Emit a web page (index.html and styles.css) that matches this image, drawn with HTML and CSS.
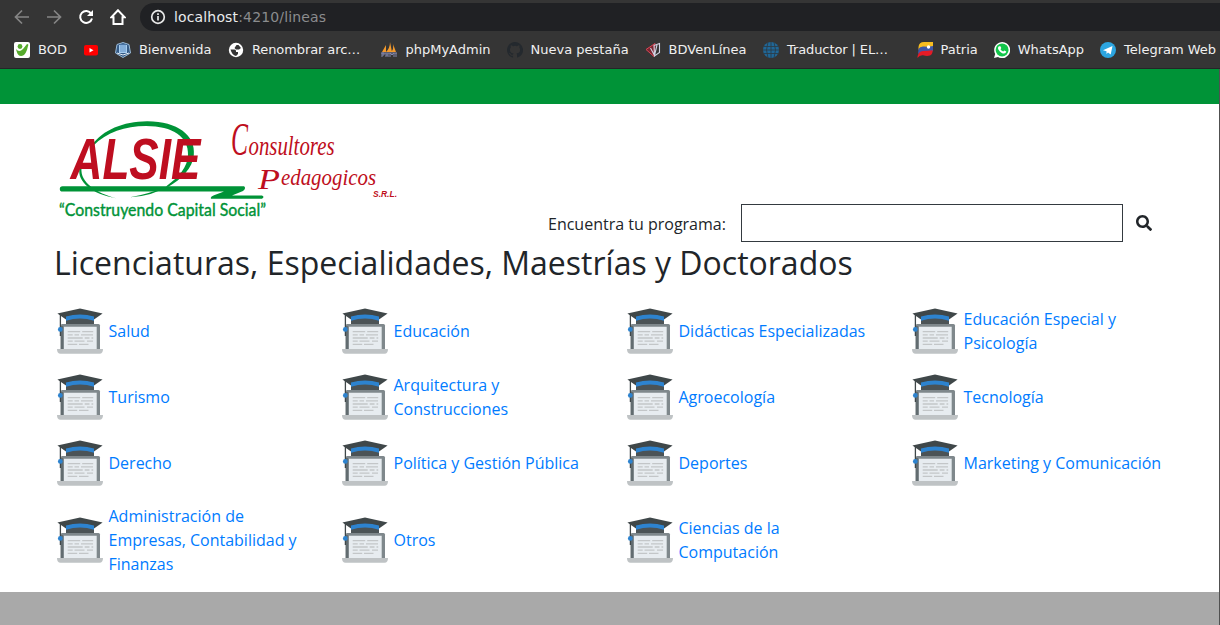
FILE: index.html
```html
<!DOCTYPE html>
<html lang="es">
<head>
<meta charset="utf-8">
<title>Líneas</title>
<link rel="stylesheet" href="styles.css">
</head>
<body>
<svg class="defs" width="0" height="0" aria-hidden="true">
  <symbol id="course" viewBox="0 0 50 50">
    <path d="M5.700 19.500q0-1.500 1.500-1.500H43.500q1.500 0 1.500 1.500V44H5.700z" fill="#7f888c"/>
    <path d="M5.700 20h2.300v24H5.700z" fill="#626c70"/>
    <path d="M9 20.800h32.700V44H9z" fill="#e7ecf0"/>
    <path d="M12.700 25.700h12.500M27.200 25.700h11M12.700 28.900h5M19.500 28.900h4.500M26 28.900h12M12.700 32h15M29.700 32h4.800M36.500 32h1.700M12.700 35.200h5M19.500 35.200h10M32 35.200h6M12.700 38.300h9.500M24 38.300h9.500" stroke="#c3c6c8" stroke-width="1.300"/>
    <path d="M2 43h46q0 4.700-3.500 4.700h-39Q2 47.700 2 43z" fill="#bfc3c5"/>
    <path d="M11 11h28v7H11z" fill="#4b5356"/>
    <path d="M2.400 7.400 25 2.400l22.600 5L39 13.500v-2q-14-5-28 0v2z" fill="#3f4749"/>
    <path d="M11 10.500q14-4.200 28 0v4.200q-14-4.300-28 0z" fill="#2d83cf"/>
    <path d="M5.400 7.500v22.500" stroke="#3f4749" stroke-width="1.300"/>
    <circle cx="5.300" cy="23.400" r="2.400" fill="#2d83cf"/>
  </symbol>
</svg>

<header class="browser">
  <div class="toolbar">
    <svg class="nav" viewBox="0 0 16 16"><path class="dim" d="M15 8H2M8 1.500 1.500 8 8 14.500"/></svg>
    <svg class="nav" viewBox="0 0 16 16"><path class="dim" d="M1 8h13M8 1.500 14.500 8 8 14.500"/></svg>
    <svg class="nav" viewBox="0 0 16 16"><path class="lit" d="M13.200 4.600A6 6 0 1 0 14 9.500"/><path d="M15 1v6H9z" fill="#fff"/></svg>
    <svg class="nav" viewBox="0 0 16 16"><path class="lit" d="M8 1.300 1.300 8.300H3.500V15h9V8.300h2.200z"/></svg>
    <div class="address">
      <svg class="info" viewBox="0 0 16 16"><circle cx="8" cy="8" r="6.300"/><path d="M8 7v4.500M8 4.300v1.700"/></svg>
      <span class="url">localhost<span class="path">:4210/lineas</span></span>
    </div>
  </div>
  <nav class="bookmarks">
    <a class="bookmark"><svg viewBox="0 0 16 16"><rect width="16" height="16" rx="2" fill="#fff"/><circle cx="6" cy="4.500" r="2.400" fill="#56aa2c"/><path d="M2 7q3 4 7 0l4-5q2 0 1 2c-1 5-3 10-7 10-3 0-4-3-5-7z" fill="#56aa2c"/></svg>BOD</a>
    <a class="bookmark"><svg viewBox="0 0 16 16"><rect x="1" y="3" width="14" height="10.500" rx="2" fill="#f00"/><path d="m6.500 6 4 2.200-4 2.300z" fill="#fff"/></svg></a>
    <a class="bookmark"><svg viewBox="0 0 16 16"><path d="M8 .5 14 2.500 15.500 11 8 15.500.5 11 2 2.500z" fill="#345b87" stroke="#9bbbd8"/><path d="M4 3h8v8H4z" fill="#a6ccef"/><path d="M6 2v8M8 2v8M10 2v8" stroke="#5f8fc3"/><path d="m2 11 6 2 6-2" fill="none" stroke="#e6edf4"/></svg>Bienvenida</a>
    <a class="bookmark wide"><svg viewBox="0 0 16 16"><circle cx="8" cy="8" r="7.200" fill="#fff"/><path d="M2.500 7.500h4q1.500 0 1.500 1.500v1h2v2l-2 2q-4-1-5.500-6.500M13 6l-2 1.500H8L6.500 6l2-3h2" fill="#353535"/></svg><span class="label-max">Renombrar arc…</span></a>
    <a class="bookmark"><svg viewBox="0 0 16 16"><path d="M1 10 5 3v7M5 10q4-4 4-10l2 10M10 10q3-3 2-8l3 8" fill="#f39a2c"/><path d="M1 15v-4h2v2H1m4 2v-4m0 2h2m0-2v4m2 0v-4l2 2 2-2v4m2-4v4M0 11h16" fill="none" stroke="#8588ad"/></svg>phpMyAdmin</a>
    <a class="bookmark"><svg viewBox="0 0 16 16"><path fill="#24292e" d="M8 0C3.580 0 0 3.580 0 8c0 3.540 2.290 6.530 5.470 7.590.4.070.55-.17.55-.38v-1.490c-2.010.37-2.530-.49-2.690-.94-.09-.23-.48-.94-.82-1.130-.28-.15-.68-.52-.01-.53.63-.01 1.080.58 1.230.82.72 1.210 1.870.87 2.330.66.070-.52.28-.87.51-1.070-1.780-.2-3.640-.89-3.640-3.950 0-.87.31-1.590.82-2.150-.08-.2-.36-1.020.08-2.120 0 0 .67-.21 2.200.82a7.600 7.600 0 0 1 4 0c1.530-1.040 2.200-.82 2.200-.82.44 1.100.16 1.920.08 2.120.51.56.82 1.270.82 2.150 0 3.070-1.870 3.750-3.650 3.950.29.25.54.73.54 1.480v2.200c0 .21.15.46.55.38A8 8 0 0 0 8 0z"/></svg>Nueva pestaña</a>
    <a class="bookmark"><svg viewBox="0 0 16 16"><path d="M1 7.500 10 1.500 9 14.500z" fill="#7a2530" stroke="#d94655"/><path d="m9 3.500 5.500-2v9L9.500 14zM5.500 6l4 7.500L12 3" fill="none" stroke="#d0d2e2" stroke-width="1.100"/></svg>BDVenLínea</a>
    <a class="bookmark wide"><svg viewBox="0 0 16 16"><circle cx="8" cy="8" r="8" fill="#206797"/><path d="M0 4.500h16M0 8h16M0 11.500h16M8 0v16M5 0Q2 8 5 16M11 0q3 8 0 16" fill="none" stroke="#2b3d4a" stroke-width=".9"/></svg><span class="label-max">Traductor | EL…</span></a>
    <a class="bookmark"><svg viewBox="0 0 16 16"><path d="M1.500 5Q2 0 7 0h9v5H8Q3 5 1.500 8z" fill="#f8bd20"/><path d="M1.500 7Q3 4 7 4.500T16 4v5q-3 2-7 .8T1 12z" fill="#3e57a8"/><path d="M.3 16Q1 9 6 9t9.700-.8q0 4-2.700 5.300-3 1-7-.2-3-.5-5.700 2.700z" fill="#e41b26"/><circle cx="11.500" cy="5" r="1.700" fill="#fff"/></svg>Patria</a>
    <a class="bookmark"><svg viewBox="0 0 16 16"><path d="m0 16 1.200-4A8 8 0 1 1 4 14.900z" fill="#fff"/><circle cx="8.100" cy="7.900" r="6.500" fill="#13c64b"/><path d="M5 4.200h1.400L7.300 6l-.8 1.200q1 1.700 2.800 2.400l1-1 2 1q-.4 2-2.300 2C7 11.500 4 8 4 6q0-1.200 1-1.800z" fill="#fff"/></svg>WhatsApp</a>
    <a class="bookmark"><svg viewBox="0 0 16 16"><circle cx="8" cy="8" r="8" fill="#2ca5e0"/><path d="m3 8.200 9.500-4.200-1.800 8.500L8 10.400 6.500 12V9.300z" fill="#fff"/></svg>Telegram Web</a>
  </nav>
</header>

<div class="page">
  <div class="band"></div>
  <main class="content">
    <div class="top">
      <svg class="logo" viewBox="0 0 350 120" role="img">
        <path d="M42 35C53 20 73 11.500 97 11.300c30-.2 49 14 46.800 34C142.500 58 132 69 118 77l-2-.6C129 67 137.500 57 138 45c.8-18-15-29-42-29C75 16 57 22 43 36z" fill="#009337"/>
        <path d="M29.500 58C27 72 42 84 66 88.200 47 83 30 73 31.500 58zM80 87.300q18-3 38-11.300-15 10-38 11.300z" fill="#009337"/>
        <text class="brand" x="20.500" y="68.500" textLength="130" lengthAdjust="spacingAndGlyphs">ALSIE</text>
        <path d="M12.500 76.200H194q2.500 2-1 4.800l-11 4.500h30q3 1.500 0 3.200h-51q-1-2.200 3-3.500l10-3.600H12.500a2.700 2.700 0 0 1 0-5.400z" fill="#009337"/>
        <text class="slogan" x="9" y="106" textLength="207" lengthAdjust="spacingAndGlyphs">“Construyendo Capital Social”</text>
        <g class="script">
          <text x="181" y="45" font-size="46" textLength="17" lengthAdjust="spacingAndGlyphs">C</text>
          <text x="198.500" y="45" font-size="27" textLength="86" lengthAdjust="spacingAndGlyphs">onsultores</text>
          <text x="208" y="79" font-size="30" textLength="22" lengthAdjust="spacingAndGlyphs">P</text>
          <text x="231" y="75" font-size="23" textLength="95" lengthAdjust="spacingAndGlyphs">edagogicos</text>
        </g>
        <text class="srl" x="323" y="87" textLength="24" lengthAdjust="spacingAndGlyphs">S.R.L.</text>
      </svg>
      <form class="search">
        <label for="q">Encuentra tu programa:</label>
        <input id="q" type="text">
        <svg viewBox="0 0 512 512"><path fill="#212529" d="M505 442.700L405.300 343c-4.500-4.500-10.600-7-17-7H372c27.600-35.300 44-79.700 44-128C416 93.100 322.900 0 208 0S0 93.100 0 208s93.100 208 208 208c48.300 0 92.700-16.400 128-44v16.300c0 6.400 2.500 12.500 7 17l99.700 99.700c9.400 9.400 24.600 9.400 33.900 0l28.300-28.300c9.400-9.400 9.400-24.600.1-34zM208 336c-70.700 0-128-57.200-128-128 0-70.700 57.200-128 128-128 70.700 0 128 57.200 128 128 0 70.700-57.200 128-128 128z"/></svg>
      </form>
    </div>
    <h2>Licenciaturas, Especialidades, Maestrías y Doctorados</h2>
    <div class="lines">
      <a class="line"><svg><use href="#course"/></svg><span>Salud</span></a>
      <a class="line"><svg><use href="#course"/></svg><span>Educación</span></a>
      <a class="line"><svg><use href="#course"/></svg><span>Didácticas Especializadas</span></a>
      <a class="line"><svg><use href="#course"/></svg><span>Educación Especial y Psicología</span></a>
      <a class="line"><svg><use href="#course"/></svg><span>Turismo</span></a>
      <a class="line"><svg><use href="#course"/></svg><span>Arquitectura y Construcciones</span></a>
      <a class="line"><svg><use href="#course"/></svg><span>Agroecología</span></a>
      <a class="line"><svg><use href="#course"/></svg><span>Tecnología</span></a>
      <a class="line"><svg><use href="#course"/></svg><span>Derecho</span></a>
      <a class="line"><svg><use href="#course"/></svg><span>Política y Gestión Pública</span></a>
      <a class="line"><svg><use href="#course"/></svg><span>Deportes</span></a>
      <a class="line"><svg><use href="#course"/></svg><span>Marketing y Comunicación</span></a>
      <a class="line"><svg><use href="#course"/></svg><span>Administración de Empresas, Contabilidad y Finanzas</span></a>
      <a class="line"><svg><use href="#course"/></svg><span>Otros</span></a>
      <a class="line"><svg><use href="#course"/></svg><span>Ciencias de la Computación</span></a>
    </div>
  </main>
  <footer class="footer"></footer>
</div>
</body>
</html>
```

FILE: styles.css
```css
* { box-sizing: border-box; }
body {
  margin: 0;
  height: 625px;
  overflow: hidden;
  display: flex;
  flex-direction: column;
  background: #fff;
  color: #212529;
  font: 16px/24px "Open Sans", sans-serif;
}
.defs { position: absolute; }

.browser {
  height: 69px;
  flex: none;
  background: #353535;
  border-bottom: 1px solid #242527;
  font-family: "DejaVu Sans", sans-serif;
}
.toolbar {
  display: flex;
  align-items: center;
  gap: 16px;
  height: 31px;
  padding: 3px 0 0 14px;
}
.nav { width: 16px; height: 16px; flex: none; }
.nav path.dim { fill: none; stroke: #858585; stroke-width: 1.7; }
.nav path.lit { fill: none; stroke: #fff; stroke-width: 2; }
.address {
  flex: 1;
  display: flex;
  align-items: center;
  gap: 8px;
  height: 28px;
  margin-left: -2px;
  padding-left: 10px;
  background: #202124;
  border-radius: 14px 0 0 14px;
}
.info { width: 16px; height: 16px; fill: none; stroke: #e8e8e8; stroke-width: 1.7; }
.url { color: #e8eaed; font-size: 14px; line-height: 20px; letter-spacing: .15px; }
.path { color: #8b8c8e; }

.bookmarks {
  display: flex;
  align-items: center;
  gap: 16px;
  height: 37px;
  padding-left: 14px;
  white-space: nowrap;
}
.bookmark {
  display: flex;
  align-items: center;
  gap: 8px;
  flex: none;
  color: #f0f0f0;
  font-size: 13px;
  line-height: 20px;
}
.bookmark svg { width: 16px; height: 16px; flex: none; }
.bookmark.wide { padding-left: .5px; }
.label-max { width: 113.5px; letter-spacing: -.1px; }

.page {
  flex: 1;
  display: flex;
  flex-direction: column;
  border-right: 1px solid #505050;
}
.band { height: 35px; background: #009337; }
.content { height: 488px; padding-left: 55px; }
.top {
  display: flex;
  height: 138px;
  padding-top: 6px;
}
.logo { width: 350px; height: 120px; margin-left: -5px; flex: none; }
.brand { font: italic bold 57px "Liberation Sans", sans-serif; fill: #be0e20; }
.slogan { font: 17px Lato, sans-serif; fill: #009337; stroke: #009337; stroke-width: .4; }
.script { font-family: "Liberation Serif", serif; font-style: italic; fill: #be0e20; }
.srl { font: italic bold 8.500px "Liberation Sans", sans-serif; fill: #be0e20; }
.search {
  display: flex;
  align-items: center;
  align-self: flex-end;
  height: 38px;
  margin-left: 148px;
}
.search label { width: 193px; padding-top: 2px; }
.search input {
  width: 382px;
  height: 38px;
  border: 1px solid #343a40;
  background: #fff;
}
.search svg { width: 16px; height: 16px; margin-left: 12.5px; }
h2 {
  margin: 2px 0 16px -1px;
  font-size: 32px;
  font-weight: 400;
  line-height: 38px;
}
.lines {
  display: grid;
  grid-template-columns: repeat(4, 285px);
}
.line {
  display: flex;
  align-items: center;
  gap: 3.5px;
  padding: 8px 0;
  color: #007bff;
}
.line svg { width: 50px; height: 50px; flex: none; }
.line span { width: 204px; }
.footer { flex: 1; background: #a9a9a9; }
```
